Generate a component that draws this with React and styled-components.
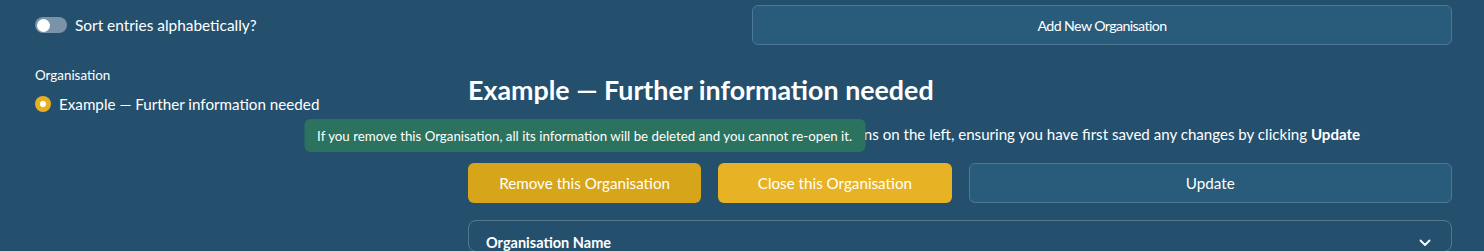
import { useState } from "react";
import styled, { createGlobalStyle } from "styled-components";

const GlobalStyle = createGlobalStyle`
  html, body {
    margin: 0;
    background: #24506e;
    font-family: "Lato", "Noto Sans", sans-serif;
    color: #ffffff;
  }
`;

const Page = styled.div`
  padding: 5px 32px 0 35px;
  height: 246px;
  overflow: hidden;
`;

const TopRow = styled.div`
  display: grid;
  grid-template-columns: 1fr 1fr;
  gap: 17px;
  align-items: center;
`;

const ToggleLabel = styled.label`
  display: flex;
  align-items: center;
  gap: 8px;
  font-size: 15.4px;
  cursor: pointer;
`;

const Track = styled.span`
  width: 32px;
  height: 16px;
  border-radius: 8px;
  background: ${(p) => (p.$on ? "#e6b023" : "#7a93a7")};
  display: flex;
  align-items: center;
  padding: 0 2px;
  box-sizing: border-box;
  justify-content: ${(p) => (p.$on ? "flex-end" : "flex-start")};
`;

const Knob = styled.span`
  width: 13px;
  height: 13px;
  border-radius: 50%;
  background: #ffffff;
`;

const Button = styled.button`
  height: 40px;
  border-radius: 6px;
  font-family: inherit;
  font-size: ${(p) => (p.$condensed ? "14.2px" : "15.2px")};
  letter-spacing: ${(p) => (p.$condensed ? "-0.6px" : "normal")};
  color: #ffffff;
  cursor: pointer;
  border: 1px solid ${(p) => (p.$variant === "outline" ? "#4d7797" : "transparent")};
  background: ${(p) =>
    p.$variant === "danger" ? "#d6a519" : p.$variant === "warn" ? "#e7b223" : "#295b7b"};
  width: 100%;
`;

const Body = styled.div`
  display: grid;
  grid-template-columns: 416px 1fr;
  gap: 17px;
  margin-top: 17px;
`;

const Sidebar = styled.div`
  padding-top: 4px;
`;

const FieldLabel = styled.div`
  font-size: 13.4px;
  line-height: 18px;
  margin-bottom: 10px;
`;

const RadioRow = styled.label`
  display: flex;
  align-items: center;
  gap: 8px;
  font-size: 15.2px;
  line-height: 20px;
`;

const RadioDot = styled.span`
  width: 16px;
  height: 16px;
  border-radius: 50%;
  background: #e6b023;
  display: flex;
  align-items: center;
  justify-content: center;
  &::after {
    content: "";
    width: 6px;
    height: 6px;
    border-radius: 50%;
    background: #ffffff;
  }
`;

const Main = styled.div`
  padding-top: 13px;
`;

const Heading = styled.h2`
  margin: 0;
  font-size: 26.8px;
  line-height: 31px;
  font-weight: 700;
`;

const Intro = styled.p`
  margin: 17px 0 0;
  font-size: 15.1px;
  line-height: 22px;
  white-space: nowrap;
`;

const Actions = styled.div`
  display: grid;
  grid-template-columns: repeat(4, 1fr);
  gap: 17px;
  margin-top: 18px;
`;

const Slot = styled.div`
  position: relative;
  grid-column: span ${(p) => p.$span || 1};
`;

const Tooltip = styled.div`
  position: absolute;
  bottom: calc(100% + 11px);
  left: 50%;
  transform: translateX(-50%);
  white-space: nowrap;
  background: #2b735e;
  border-radius: 6px;
  height: 33px;
  padding: 0 13px;
  display: flex;
  align-items: center;
  font-size: 13.3px;
  z-index: 2;
`;

const Card = styled.div`
  margin-top: 17px;
  border: 1px solid rgba(255, 255, 255, 0.22);
  border-radius: 8px;
`;

const CardHeader = styled.div`
  display: flex;
  align-items: center;
  justify-content: space-between;
  padding: 13px 20px 0 17px;
  font-size: 14.5px;
  font-weight: 700;
`;

const Chevron = () => (
  <svg width="12" height="8" viewBox="0 0 12 8" fill="none">
    <path d="M1.5 1.5 6 6l4.5-4.5" stroke="#fff" strokeWidth="1.8" strokeLinecap="round" strokeLinejoin="round" />
  </svg>
);

export default function App() {
  const [sorted, setSorted] = useState(false);

  return (
    <Page>
      <GlobalStyle />
      <TopRow>
        <ToggleLabel onClick={() => setSorted(!sorted)}>
          <Track $on={sorted}>
            <Knob />
          </Track>
          Sort entries alphabetically?
        </ToggleLabel>
        <Button $variant="outline" $condensed>Add New Organisation</Button>
      </TopRow>
      <Body>
        <Sidebar>
          <FieldLabel>Organisation</FieldLabel>
          <RadioRow>
            <RadioDot />
            Example — Further information needed
          </RadioRow>
        </Sidebar>
        <Main>
          <Heading>Example — Further information needed</Heading>
          <Intro>
            You can now move to one of your other existing Organisations on the left, ensuring you have first
            saved any changes by clicking <b>Update</b>
          </Intro>
          <Actions>
            <Slot>
              <Tooltip>
                If you remove this Organisation, all its information will be deleted and you cannot re-open it.
              </Tooltip>
              <Button $variant="danger">Remove this Organisation</Button>
            </Slot>
            <Slot>
              <Button $variant="warn">Close this Organisation</Button>
            </Slot>
            <Slot $span={2}>
              <Button $variant="outline">Update</Button>
            </Slot>
          </Actions>
          <Card>
            <CardHeader>
              Organisation Name
              <Chevron />
            </CardHeader>
          </Card>
        </Main>
      </Body>
    </Page>
  );
}
